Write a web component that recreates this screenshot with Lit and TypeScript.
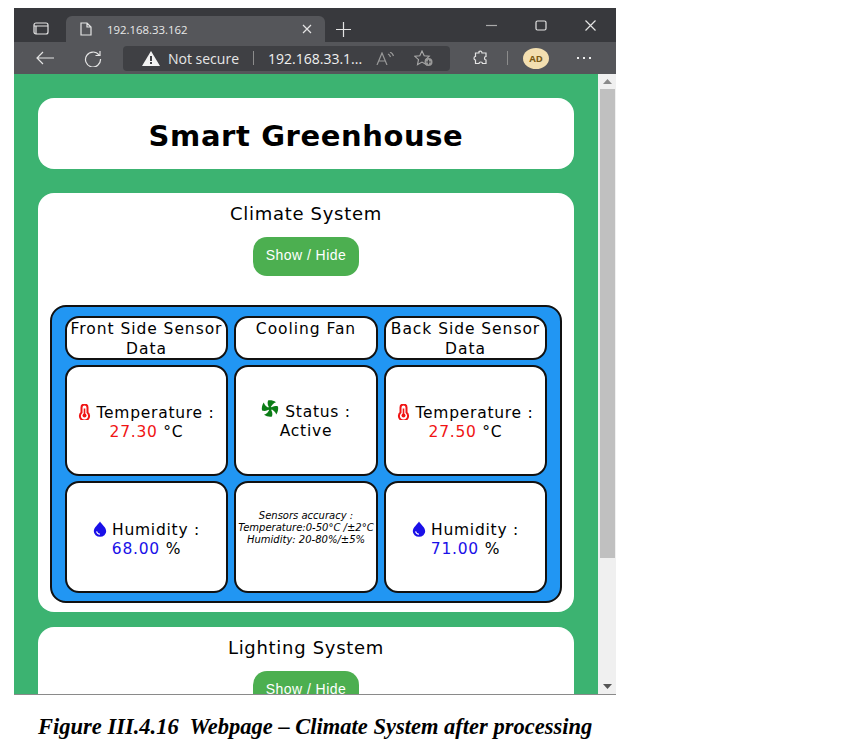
import { LitElement, html, css, svg } from "lit";
import { customElement } from "lit/decorators.js";

const thermometer = html`<svg class="ico" width="13" height="16" viewBox="0 0 13 16" fill="none">
  <path d="M3.500 8.500V3.500a3 3 0 0 1 6 0v5a4.600 4.600 0 1 1-6 0z" stroke="#f01414" stroke-width="2"/>
  <circle cx="6.500" cy="11.500" r="2" fill="#f01414"/><path d="M6.500 4.500v7" stroke="#f01414" stroke-width="1.600"/>
</svg>`;

const drop = html`<svg class="ico" width="14" height="16" viewBox="0 0 14 16">
  <path d="M7 .5C9 3.600 13.200 6.600 13.200 10.200a6.200 5.600 0 0 1-12.400 0C.8 6.600 5 3.600 7 .5z" fill="#1a10e8"/>
  <path d="M3.600 10.400c.3 1.800 1.600 2.700 3.400 2.800" stroke="#fff" stroke-width="1.100" fill="none"/>
</svg>`;

const blade = "M9 8.500C7 6.500 6 3.500 7 .5C9.500 0 12.500 .5 15 2.200C12.500 3 10.500 5 9 8.500z";
const fan = html`<svg class="ico fan" width="18" height="17" viewBox="0 0 18 17" fill="#0b7d16">
  ${[0, 90, 180, 270].map((a) => svg`<path d=${blade} transform="rotate(${a} 9 8.500)"/>`)}
  <circle cx="9" cy="8.500" r="2"/>
</svg>`;

const chromeIcon = (w: number, h: number, body: unknown) => html`<svg width=${w} height=${h} viewBox="0 0 ${w} ${h}" fill="none" stroke="#e4e4e4" stroke-width="1.2">${body}</svg>`;

@customElement("app-root")
export class AppRoot extends LitElement {
  static styles = css`
    :host { display: block; width: 864px; height: 756px; background: #fff; overflow: hidden; }
    .page { padding: 8px 0 0 14px; }
    .browser { width: 602px; height: 686px; display: flex; flex-direction: column; overflow: hidden; border-bottom: 1px solid #8a8a8a; font-family: "Open Sans", sans-serif; }

    .titlebar { height: 34px; background: #38393d; display: flex; align-items: flex-end; color: #e8e8e8; flex: none; }
    .tabs-btn { width: 52px; height: 26px; box-sizing: border-box; display: flex; align-items: center; justify-content: center; padding: 0 0 2px 2px; }
    .tab { width: 259px; height: 26px; background: #55565a; border-radius: 6px 6px 0 0; display: flex; align-items: center; padding: 0 13px 0 14px; box-sizing: border-box; font-size: 11.4px; }
    .tab span { margin-left: 15px; flex: 1; }
    .plus { margin-left: 11px; height: 26px; display: flex; align-items: center; }
    .win { margin-left: auto; height: 34px; display: flex; align-items: center; gap: 38px; padding: 0 20px 0 0; align-self: flex-start; }

    .toolbar { height: 32px; background: #55565a; display: flex; align-items: center; flex: none; color: #eee; }
    .nav { width: 109px; display: flex; align-items: center; gap: 30px; padding-left: 22px; box-sizing: border-box; }
    .address { width: 327px; height: 25px; background: #3f4044; border-radius: 4px; display: flex; align-items: center; padding-left: 19px; box-sizing: border-box; font-size: 14px; }
    .address .secure { margin-left: 8px; color: #e6e6e6; }
    .address .sep { width: 1px; height: 14px; background: #8c8c8c; margin: 0 14px 0 14px; }
    .address .url { color: #f0f0f0; }
    .address .read { margin-left: 14px; display: flex; }
    .address .fav { margin-left: 20px; display: flex; }
    .tools { display: flex; align-items: center; margin-left: 23px; }
    .tools .sep { width: 1px; height: 14px; background: #8c8c8c; margin: 0 15px 0 18px; }
    .avatar { width: 26px; height: 21px; border-radius: 50%; background: #f3dfb0; color: #7a5a14; font-size: 9.5px; font-weight: 700; display: flex; align-items: center; justify-content: center; }
    .more { margin-left: 28px; display: flex; gap: 4px; }
    .more i { width: 2px; height: 2px; background: #eee; display: block; }

    .viewport { flex: 1; min-height: 0; display: flex; overflow: hidden; }
    .content { flex: 1; min-width: 0; background: #3cb371; padding: 24px 24px 0; box-sizing: border-box; overflow: hidden; font-family: "DejaVu Sans", sans-serif; color: #000; }
    .card { background: #fff; border-radius: 16px; text-align: center; }
    .head { height: 71px; display: flex; align-items: center; justify-content: center; margin-bottom: 24px; padding-top: 4px; box-sizing: border-box; }
    .head h1 { margin: 0; font-size: 29px; font-weight: 700; letter-spacing: 0.6px; }
    .section { padding: 11px 12px 0; height: 419px; box-sizing: border-box; margin-bottom: 15px; }
    .section h2 { margin: 0; font-size: 18px; line-height: 20px; font-weight: 400; letter-spacing: 0.7px; }
    .btn { display: block; width: 106px; height: 39px; margin: 13px auto 29px; padding: 0 0 3px; border: 0; border-radius: 14px; background: #4caf50; color: #fff; font-family: "Liberation Sans", sans-serif; font-size: 14px; letter-spacing: 0.45px; }
    .grid { height: 298px; box-sizing: border-box; background: #2196f3; border: 2px solid #111; border-radius: 16px; padding: 9px 13px; display: grid; grid-template-columns: 163px 144px 163px; grid-template-rows: 44px 111px 112px; gap: 5px 6px; justify-content: center; }
    .cell { background: #fff; border: 2px solid #111; border-radius: 14px; box-sizing: border-box; display: flex; align-items: center; justify-content: center; text-align: center; font-size: 15.5px; line-height: 19px; letter-spacing: 0.75px; white-space: nowrap; }
    .cell.top { line-height: 20px; letter-spacing: 0.95px; padding-top: 1px; }
    .value { padding-top: 4px; }
    .value.low { padding-top: 6px; }
    .ico { vertical-align: -2px; margin-right: 5px; }
    .fan { vertical-align: 0; margin-right: 6px; }
    .temp { color: #f01414; }
    .hum { color: #1a10e8; }
    .cell.note { font-style: italic; font-size: 10px; line-height: 12px; letter-spacing: 0; padding-bottom: 18px; }

    .scroll { width: 18px; flex: none; background: #f0f0f0; display: flex; flex-direction: column; align-items: center; }
    .arrow { height: 15px; display: flex; align-items: center; justify-content: center; flex: none; }
    .thumb { width: 15px; height: 469px; background: #c0c0c0; flex: none; }
    .fill { flex: 1; }

    .caption { margin: 19px 0 0 24px; font-family: "Liberation Serif", serif; font-size: 22.5px; line-height: 26px; font-weight: 700; font-style: italic; white-space: pre; }
  `;

  private sensor(icon: unknown, label: string, value: string, unit: string, cls: string) {
    return html`<div class="cell value ${cls === "hum" ? "low" : ""}"><div>${icon}${label} :<br /><span class=${cls}>${value}</span> ${unit}</div></div>`;
  }

  render() {
    return html`
      <div class="page">
        <div class="browser">
          <div class="titlebar">
            <div class="tabs-btn">${chromeIcon(16, 13, svg`<rect x="1" y="1" width="14" height="11" rx="2"/><path d="M1 4h14M3 4v8" />`)}</div>
            <div class="tab">
              ${chromeIcon(12, 14, svg`<path d="M1 1h6l4 4v8H1zM7 1v4h4"/>`)}
              <span>192.168.33.162</span>
              ${chromeIcon(10, 10, svg`<path d="M1 1l8 8M9 1l-8 8"/>`)}
            </div>
            <div class="plus">${chromeIcon(15, 15, svg`<path d="M7.500 0v15M0 7.500h15"/>`)}</div>
            <div class="win">
              ${chromeIcon(11, 11, svg`<path d="M0 5.500h11" stroke="#aaa"/>`)}
              ${chromeIcon(12, 11, svg`<rect x="1" y="1" width="10" height="9" rx="1.500"/>`)}
              ${chromeIcon(11, 11, svg`<path d="M.5.5l10 10M10.500.5l-10 10"/>`)}
            </div>
          </div>
          <div class="toolbar">
            <div class="nav">
              ${chromeIcon(18, 14, svg`<path d="M18 7H1M7 1L1 7l6 6"/>`)}
              ${chromeIcon(18, 17, svg`<path d="M15 5A7.500 7.500 0 1 0 16.500 9M16 1v4.500h-4.500"/>`)}
            </div>
            <div class="address">
              <svg width="18" height="15" viewBox="0 0 18 15"><path d="M9 0l9 15H0z" fill="#f2f2f2"/><path d="M8 5h2v5H8zM8 11h2v2H8z" fill="#3f4044"/></svg>
              <span class="secure">Not secure</span>
              <i class="sep"></i>
              <span class="url">192.168.33.1...</span>
              <span class="read">${chromeIcon(18, 13, svg`<path d="M1 13L6 1l5 12M3 9h6M12 2c1 .5 2 1.500 2.500 3M14 0c1.500.8 3 2.500 3.500 4" stroke="#999"/>`)}</span>
              <span class="fav"><svg width="20" height="17" viewBox="0 0 20 17" fill="none"><path d="M8 1l2.200 4.800 5 .5-3.700 3.400 1 5-4.500-2.600-4.500 2.600 1-5L.800 6.300l5-.5z" stroke="#aaa" stroke-width="1.100"/><circle cx="14.500" cy="12" r="4" fill="#999"/><path d="M14.500 9.800v4.400M12.300 12h4.400" stroke="#3f4044" stroke-width="1.100"/></svg></span>
            </div>
            <div class="tools">
              ${chromeIcon(16, 16, svg`<path d="M6 1.500c1.500-1 3 0 3 1.500h4v3.500c-2 0-2 3.500 0 3.500v3.500H9.500c0-2-3.500-2-3.500 0H2.500V10C.5 10 .5 6.500 2.500 6.500V3H6z"/>`)}
              <i class="sep"></i>
              <div class="avatar">AD</div>
              <div class="more"><i></i><i></i><i></i></div>
            </div>
          </div>
          <div class="viewport">
            <div class="content">
              <div class="card head"><h1>Smart Greenhouse</h1></div>
              <div class="card section">
                <h2>Climate System</h2>
                <button class="btn">Show / Hide</button>
                <div class="grid">
                  <div class="cell top"><div>Front Side Sensor<br />Data</div></div>
                  <div class="cell top"><div>Cooling Fan<br />&nbsp;</div></div>
                  <div class="cell top"><div>Back Side Sensor<br />Data</div></div>
                  ${this.sensor(thermometer, "Temperature", "27.30", "°C", "temp")}
                  <div class="cell"><div>${fan}Status :<br />Active</div></div>
                  ${this.sensor(thermometer, "Temperature", "27.50", "°C", "temp")}
                  ${this.sensor(drop, "Humidity", "68.00", "%", "hum")}
                  <div class="cell note"><div>Sensors accuracy :<br />Temperature:0-50°C /±2°C<br />Humidity: 20-80%/±5%</div></div>
                  ${this.sensor(drop, "Humidity", "71.00", "%", "hum")}
                </div>
              </div>
              <div class="card section">
                <h2>Lighting System</h2>
                <button class="btn">Show / Hide</button>
              </div>
            </div>
            <div class="scroll">
              <div class="arrow"><svg width="9" height="5"><path d="M0 5l4.500-5L9 5z" fill="#8a8a8a"/></svg></div>
              <div class="thumb"></div>
              <div class="fill"></div>
              <div class="arrow"><svg width="9" height="5"><path d="M0 0l4.500 5L9 0z" fill="#555"/></svg></div>
            </div>
          </div>
        </div>
        <div class="caption">Figure III.4.16  Webpage – Climate System after processing</div>
      </div>
    `;
  }
}
